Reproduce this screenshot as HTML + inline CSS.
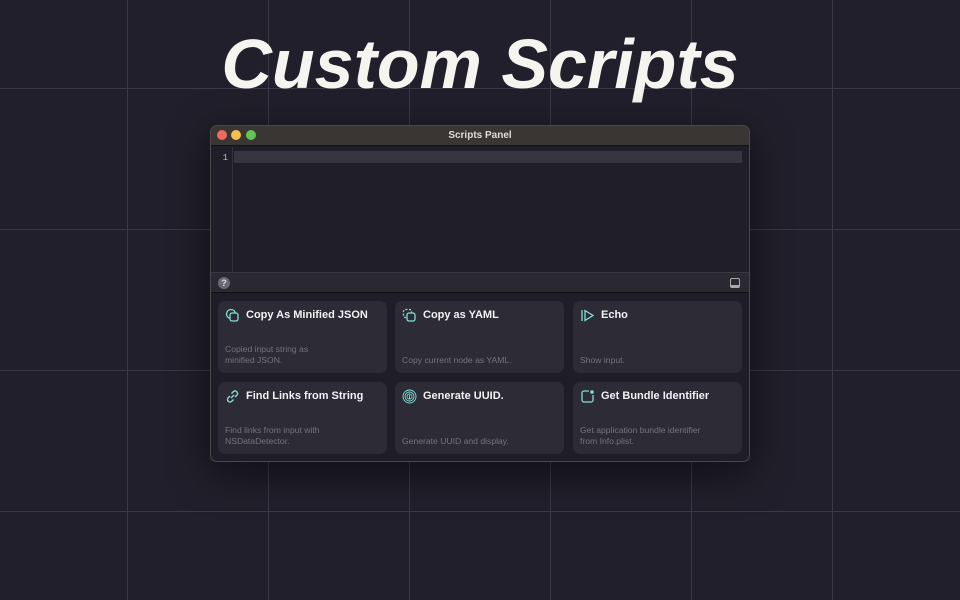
<!DOCTYPE html>
<html><head><meta charset="utf-8"><style>
*{margin:0;padding:0;box-sizing:border-box}
body{width:960px;height:600px;overflow:hidden;background:#201f2b;font-family:"Liberation Sans",sans-serif;position:relative}
.v{position:absolute;top:0;width:1px;height:600px;background:#3a3946}
.h{position:absolute;left:0;height:1px;width:960px;background:#3a3946}
h1{position:absolute;left:0;width:960px;top:24px;text-align:center;color:#f6f4ee;font-size:70px;font-weight:bold;font-style:italic;letter-spacing:0px}
.win{position:absolute;left:210px;top:125px;width:540px;height:337px;border-radius:7px;background:#1f1e28;border:1px solid #4a4848;overflow:hidden;box-shadow:0 10px 40px rgba(0,0,0,.5)}
.tb{height:20px;background:#3a3633;border-bottom:1px solid #111;position:relative}
.tb span{position:absolute;top:4px;width:10px;height:10px;border-radius:50%}
.tb b{position:absolute;width:100%;text-align:center;top:4px;font-size:10px;color:#ddd}
.ed{position:absolute;top:21px;left:0;right:0;height:125px;background:#201f29}
.gut{position:absolute;left:0;top:0;width:22px;height:125px;border-right:1px solid #33323c;color:#bbb;font-family:"Liberation Mono",monospace;font-size:9px;text-align:right;padding-right:4px;padding-top:6px}
.cur{position:absolute;left:23px;right:7px;top:4px;height:12px;background:#363541}
.tool{position:absolute;top:146px;left:0;right:0;height:21px;background:#2a2932;border-top:1px solid #3a3942;border-bottom:1px solid #111}
.q{position:absolute;left:7px;top:4px;width:12px;height:12px;border-radius:50%;background:#6a6970;color:#ddd;font-size:9px;font-weight:bold;text-align:center;line-height:12px}
.card{position:absolute;width:169px;height:72px;background:#2c2b36;border-radius:7px}
.card .t{position:absolute;left:28px;top:8px;color:#f2f2f2;font-size:11px;font-weight:bold}
.card .d{position:absolute;left:7px;bottom:7px;color:#75747e;font-size:8.6px;line-height:11px}
.card svg{position:absolute;left:7px;top:7px}
</style></head><body>
<div class="v" style="left:127px"></div><div class="v" style="left:268px"></div><div class="v" style="left:409px"></div><div class="v" style="left:550px"></div><div class="v" style="left:691px"></div><div class="v" style="left:832px"></div>
<div class="h" style="top:88px"></div><div class="h" style="top:229px"></div><div class="h" style="top:370px"></div><div class="h" style="top:511px"></div>
<h1>Custom Scripts</h1>
<div class="win">
<div class="tb"><span style="left:6px;background:#ed6a5e"></span><span style="left:20px;background:#f5bf4f"></span><span style="left:35px;background:#61c554"></span><b>Scripts Panel</b></div>
<div class="ed"><div class="gut">1</div><div class="cur"></div></div>
<div class="tool"><div class="q">?</div><div style="position:absolute;right:9px;top:5px;width:10px;height:10px;border:1px solid #aaa;border-radius:2px;border-bottom-width:3px"></div></div>
<div class="card" style="left:7px;top:175px"><svg width="15" height="15" viewBox="0 0 15 15" fill="none" stroke="#7fe0d8" stroke-width="1.3"><circle cx="6" cy="6" r="4.5"/><rect x="5" y="5" width="8" height="8" rx="2" fill="#2c2b36"/></svg><div class="t">Copy As Minified JSON</div><div class="d">Copied input string as<br>minified JSON.</div></div>
<div class="card" style="left:184px;top:175px"><svg width="15" height="15" viewBox="0 0 15 15" fill="none" stroke="#7fe0d8" stroke-width="1.3"><rect x="1.5" y="1.5" width="8" height="8" rx="2" stroke-dasharray="2 1.5"/><rect x="5" y="5" width="8" height="8" rx="2" fill="#2c2b36"/></svg><div class="t">Copy as YAML</div><div class="d">Copy current node as YAML.</div></div>
<div class="card" style="left:362px;top:175px"><svg width="15" height="15" viewBox="0 0 15 15" fill="none" stroke="#7fe0d8" stroke-width="1.3"><path d="M2 2v11M5 2.5l8 5-8 5z"/></svg><div class="t">Echo</div><div class="d">Show input.</div></div>
<div class="card" style="left:7px;top:256px"><svg width="15" height="15" viewBox="0 0 15 15" fill="none" stroke="#7fe0d8" stroke-width="1.4"><path d="M6 9l3-3M5 7l-2 2a2.5 2.5 0 003.5 3.5L8.5 10.5M10 8l2-2A2.5 2.5 0 008.5 2.5L6.5 4.5"/></svg><div class="t">Find Links from String</div><div class="d">Find links from input with<br>NSDataDetector.</div></div>
<div class="card" style="left:184px;top:256px"><svg width="15" height="15" viewBox="0 0 15 15" fill="none" stroke="#7fe0d8" stroke-width="0.9"><circle cx="7.5" cy="7.5" r="6.5"/><circle cx="7.5" cy="7.5" r="4.5"/><circle cx="7.5" cy="7.5" r="2.5"/><path d="M7.5 6v4"/></svg><div class="t">Generate UUID.</div><div class="d">Generate UUID and display.</div></div>
<div class="card" style="left:362px;top:256px"><svg width="15" height="15" viewBox="0 0 15 15" fill="none" stroke="#7fe0d8" stroke-width="1.3"><path d="M9 2H4a2 2 0 00-2 2v7a2 2 0 002 2h7a2 2 0 002-2V6"/><circle cx="12" cy="3" r="1.8" fill="#7fe0d8" stroke="none"/></svg><div class="t">Get Bundle Identifier</div><div class="d">Get application bundle identifier<br>from Info.plist.</div></div>
</div>
</body></html>
